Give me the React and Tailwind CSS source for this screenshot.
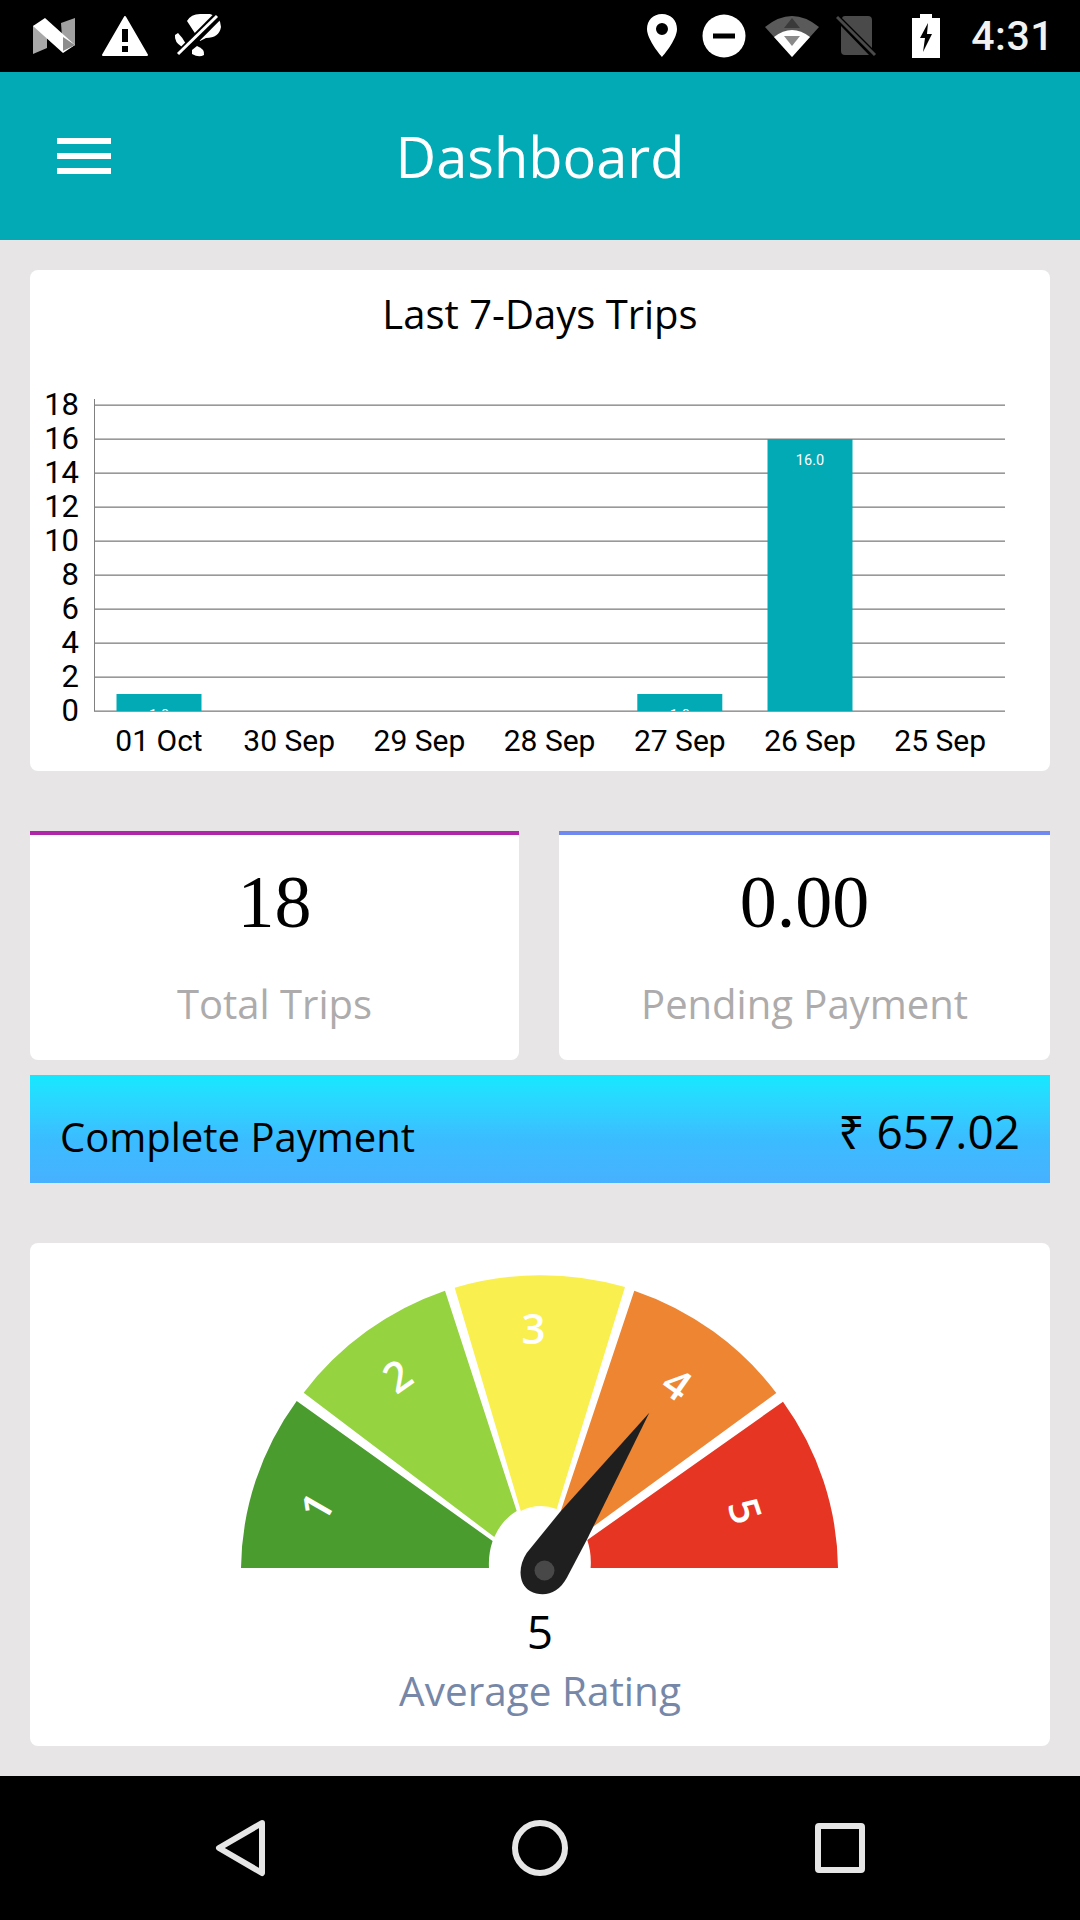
const FONT = "font-['Open_Sans','Noto_Sans',sans-serif]"

const DAYS = [
  { label: '01 Oct', value: 1 },
  { label: '30 Sep', value: 0 },
  { label: '29 Sep', value: 0 },
  { label: '28 Sep', value: 0 },
  { label: '27 Sep', value: 1 },
  { label: '26 Sep', value: 16 },
  { label: '25 Sep', value: 0 },
]

function StatusBar() {
  return (
    <div className="h-[72px] bg-black flex items-center justify-between shrink-0 pl-[33px] pr-[26px]">
      <div className="flex items-center">
        <svg width="42" height="36" viewBox="0 0 42 36" className="mt-[-1px]">
          <path d="M0 8 L14 3 V30 L0 36 Z" fill="#a8a8a8" />
          <path d="M28 5 L42 0 V27 L30 33 Z" fill="#a0a0a0" />
          <path d="M0 8 L12 0 L42 27 L30 35 Z" fill="#ffffff" />
          <path d="M30 19 L42 27 L30 33 Z" fill="#8c8c8c" />
        </svg>
        <svg width="46" height="40" viewBox="0 0 46 40" className="ml-[27px]">
          <path d="M23 1 L45 39 H1 Z" fill="#fff" stroke="#fff" strokeLinejoin="round" strokeWidth="2" />
          <rect x="20" y="13" width="6" height="13" fill="#000" />
          <rect x="20" y="30" width="6" height="6" fill="#000" />
        </svg>
        <svg width="48" height="44" viewBox="0 0 48 44" className="ml-[26px]">
          <path d="M13 7 Q17 0 26 0 L36 0 Q47 3 47 13 Q45 24 32 24 L26 27 Z" fill="#fff" />
          <path d="M4 19 Q9 24 12 30 L8 33 Q0 28 1 21 Z" fill="#fff" />
          <path d="M18 36 L23 32 Q31 35 30 41 Q25 44 18 40 Z" fill="#fff" />
          <path d="M0 46 L48 -2" stroke="#000" strokeWidth="9" />
          <path d="M4 40 L43 2" stroke="#fff" strokeWidth="3" />
        </svg>
      </div>
      <div className="flex items-center">
        <svg width="32" height="44" viewBox="0 0 32 44">
          <path fillRule="evenodd" d="M16 0 C7 0 1 6.500 1 15 C1 26 16 43 16 43 C16 43 31 26 31 15 C31 6.500 25 0 16 0 Z M16 9 A6 6 0 1 1 16 21 A6 6 0 1 1 16 9 Z" fill="#fff" />
        </svg>
        <svg width="44" height="44" viewBox="0 0 44 44" className="ml-[24px]">
          <circle cx="22" cy="22" r="21.500" fill="#fff" />
          <rect x="11" y="19.500" width="22" height="5" fill="#000" />
        </svg>
        <svg width="54" height="44" viewBox="0 0 54 44" className="ml-[19px]">
          <path d="M0 13 Q27 -9 54 13 L27 43 Z" fill="#5a5a5a" />
          <path d="M9 23 Q27 9 45 23 L27 43 Z" fill="#fff" />
          <path d="M27 4 L35 14 H19 Z" fill="#3a3a3a" />
          <path d="M19 22 H35 L27 32 Z" fill="#8a8a8a" />
        </svg>
        <svg width="42" height="42" viewBox="0 0 42 42" className="ml-[17px]">
          <path d="M6 4 Q6 1 9 1 H32 Q36 1 36 5 V33 L6 3 Z M5 11 L33 40 H9 Q5 40 5 36 Z" fill="#4a4a4a" />
          <path d="M1 2 L39 40" stroke="#4a4a4a" strokeWidth="3" />
        </svg>
        <svg width="28" height="44" viewBox="0 0 28 44" className="ml-[34px]">
          <path fillRule="evenodd" d="M8 0 H20 V4 H28 V44 H0 V4 H8 Z M16 9 L8 24 H13 L11 38 L20 20 H15 Z" fill="#fff" />
        </svg>
        <span className="ml-[31px] font-['Roboto',sans-serif] font-medium text-[41px] leading-none text-[#f2f2f2] tracking-[0.5px]">4:31</span>
      </div>
    </div>
  )
}

function Header() {
  return (
    <div className="relative h-[168px] bg-[#02aab5] flex items-center justify-center shrink-0">
      <div className="absolute left-[57px] top-[66px] w-[54px] flex flex-col gap-[9px]">
        <div className="h-[6px] bg-white" />
        <div className="h-[6px] bg-white" />
        <div className="h-[6px] bg-white" />
      </div>
      <h1 className={`${FONT} text-[56px] font-normal text-white leading-none`}>Dashboard</h1>
    </div>
  )
}

function TripsChart() {
  const ticks = [0, 2, 4, 6, 8, 10, 12, 14, 16, 18]
  return (
    <svg width="1020" height="411" viewBox="30 360 1020 411" className="block">
      <defs>
        <clipPath id="plot"><rect x="94" y="390" width="912" height="321" /></clipPath>
      </defs>
      {ticks.map(t => (
        <g key={t}>
          <rect x="94" y={711 - t * 17 - 0.5} width="911" height="1.300" fill="#808080" />
          <text x="79" y={711 - t * 17 + 9.500} textAnchor="end" fontFamily="Roboto" fontSize="31" fill="#000">{t}</text>
        </g>
      ))}
      <rect x="94" y="399" width="1" height="312" fill="#808080" />
      {DAYS.map((d, i) => {
        const cx = 159 + i * 130.2
        return (
          <g key={d.label}>
            {d.value > 0 && (
              <>
                <rect x={cx - 42.500} y={711 - d.value * 17} width="85" height={d.value * 17} fill="#02aab5" />
                <text
                  x={cx}
                  y={711 - d.value * 17 + 26}
                  clipPath="url(#plot)"
                  textAnchor="middle"
                  fontFamily="Roboto"
                  fontSize="14.500"
                  fill="#fff"
                >
                  {d.value.toFixed(1)}
                </text>
              </>
            )}
            <text x={cx} y="751" textAnchor="middle" fontFamily="Roboto" fontSize="30" fill="#000">{d.label}</text>
          </g>
        )
      })}
    </svg>
  )
}

function StatCard({ value, label, accent }) {
  return (
    <div className={`h-[229px] bg-white border-t-4 rounded-b-lg flex flex-col items-center ${accent}`}>
      <div className="font-['Liberation_Serif',serif] text-[74px] leading-none text-black mt-[30px]">{value}</div>
      <div className={`${FONT} text-[40px] leading-none text-[#adabab] mt-[45px]`}>{label}</div>
    </div>
  )
}

function Gauge() {
  const labels = [
    { n: '1', x: 317, y: 1507, r: -60 },
    { n: '2', x: 397.500, y: 1376, r: -35 },
    { n: '3', x: 533.500, y: 1329, r: 0 },
    { n: '4', x: 677, y: 1384, r: 35 },
    { n: '5', x: 745, y: 1511, r: 72 },
  ]
  return (
    <svg width="1020" height="357" viewBox="30 1243 1020 357" className="block">
      <path d="M241 1568 A299 293 0 0 1 296.700 1401 L492.600 1541 A51 61 0 0 0 489 1568 Z" fill="#4a9c2e" />
      <path d="M303.700 1392.700 A299 293 0 0 1 445 1290.700 L516.700 1511 A51 61 0 0 0 494.300 1537 Z" fill="#95d340" />
      <path d="M454.700 1287.700 A299 293 0 0 1 625 1287 L556.700 1509 A51 61 0 0 0 520.800 1511 Z" fill="#f9ef4f" />
      <path d="M634.300 1290.700 A299 293 0 0 1 776.300 1393 L587.300 1531 A51 61 0 0 0 560.800 1511 Z" fill="#ed8533" />
      <path d="M783 1401.700 A299 293 0 0 1 838 1568 L590.600 1568 A51 61 0 0 0 587.300 1540 Z" fill="#e63623" />
      {labels.map(l => (
        <text
          key={l.n}
          x={l.x}
          y={l.y + 15}
          textAnchor="middle"
          transform={`rotate(${l.r} ${l.x} ${l.y})`}
          fontFamily="Open Sans"
          fontSize="42"
          fontWeight="600"
          fill="#fff"
        >
          {l.n}
        </text>
      ))}
      <path
        d="M649.300 1412.700 L560 1512 L526.700 1553 C518 1566 518 1584 530 1591 C543 1598 558 1594 566.700 1578 L586.700 1540 Z"
        fill="#1f1f1f"
      />
      <circle cx="544.500" cy="1570.500" r="10" fill="#484848" />
    </svg>
  )
}

export default function App() {
  return (
    <div className="w-[1080px] h-[1920px] flex flex-col bg-[#e7e5e6] overflow-hidden">
      <StatusBar />
      <Header />
      <main className="flex-1 px-[30px] pt-[30px] flex flex-col">
        {/* Chart card */}
        <section className="h-[501px] bg-white rounded-lg">
          <div className={`${FONT} h-[88px] mb-[2px] flex items-center justify-center text-[40px] text-black`}>Last 7-Days Trips</div>
          <TripsChart />
        </section>

        {/* Stat cards */}
        <div className="grid grid-cols-[489px_1fr] gap-[40px] mt-[60px]">
          <StatCard value="18" label="Total Trips" accent="border-[#b026a8]" />
          <StatCard value="0.00" label="Pending Payment" accent="border-[#7089f0]" />
        </div>

        {/* Complete payment strip */}
        <div className="h-[108px] mt-[15px] px-[30px] flex items-center justify-between bg-gradient-to-b from-[#12e9ff] via-[#3bbcff] via-60% to-[#47b1ff]">
          <span className={`${FONT} text-[40px] leading-none text-black mt-[16px]`}>Complete Payment</span>
          <span className={`${FONT} text-[46px] leading-none text-black mt-[4px]`}>₹ 657.02</span>
        </div>

        {/* Rating card */}
        <section className="h-[503px] mt-[60px] bg-white rounded-lg flex flex-col items-center">
          <Gauge />
          <div className={`${FONT} text-[46px] leading-none text-black mt-[8px]`}>5</div>
          <div className={`${FONT} text-[40.500px] leading-none text-[#7687a7] mt-[17px]`}>Average Rating</div>
        </section>
      </main>

      {/* Nav bar */}
      <nav className="h-[144px] bg-black shrink-0">
        <svg width="1080" height="144" viewBox="0 1776 1080 144" className="block">
          <path d="M262 1823 L219 1848 L262 1873 Z" fill="none" stroke="#e6e6e6" strokeWidth="6" strokeLinejoin="round" />
          <circle cx="540" cy="1848" r="25" fill="none" stroke="#e6e6e6" strokeWidth="6" />
          <rect x="818" y="1826" width="44" height="44" fill="none" stroke="#e6e6e6" strokeWidth="6" rx="1" />
        </svg>
      </nav>
    </div>
  )
}
